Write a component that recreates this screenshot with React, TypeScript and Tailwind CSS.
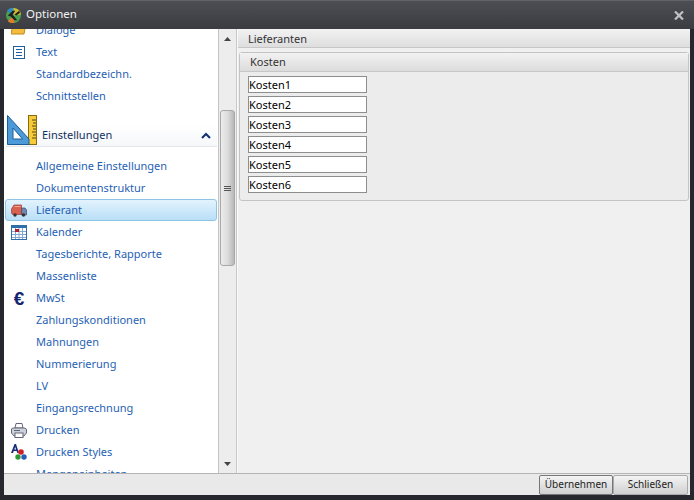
import React from 'react';

const LogoIcon = () => (
  <svg width="15" height="15" viewBox="0 0 16 16" className="shrink-0">
    <circle cx="8" cy="8" r="8" fill="#4aa04f" />
    <path d="M8 8 L1 3 A8 8 0 0 1 8 0 Z" fill="#2f8ac8" />
    <path d="M8 8 L8 0 A8 8 0 0 1 16 7 Z" fill="#d2bb2e" />
    <path d="M8 8 L2 14 A8 8 0 0 0 9 16 Z" fill="#e57a2c" />
    <path d="M2 8 L7 3 H10 L7 7 L12 13 H9 L5 9 Z" fill="#1f2020" />
    <path d="M9 7 L14 3 L15 5 L11 8 Z" fill="#1f2020" />
  </svg>
);

const FolderIcon = () => (
  <svg width="16" height="12" viewBox="0 0 16 12">
    <path d="M2 0 H15 L13 10 H0 Z" fill="#f1bd3b" stroke="#c08a1c" strokeWidth="1" />
  </svg>
);

const TextIcon = () => (
  <svg width="12" height="13" viewBox="0 0 12 13">
    <rect x=".5" y=".5" width="11" height="12" fill="#fff" stroke="#1f5f9f" />
    <path d="M3 3.5 H9 M3 6.5 H9 M3 9.5 H9" stroke="#1f5f9f" strokeWidth="1" />
  </svg>
);

const SetSquareIcon = () => (
  <svg width="30" height="30" viewBox="0 0 30 30">
    <rect x="21.5" y=".5" width="8" height="29" fill="#f5cb3a" stroke="#8a6a10" />
    <path d="M25 5 H29 M26 8 H29 M25 11 H29 M26 14 H29 M25 17 H29 M26 20 H29 M25 23 H29" stroke="#5a4508" strokeWidth="1" />
    <path d="M.5 .5 L22 24 V29.5 H.5 Z" fill="#4d9ad8" stroke="#1c5d96" />
    <path d="M6 13 L15.5 24 H6 Z" fill="#fff" stroke="#1c5d96" />
  </svg>
);

const TruckIcon = () => (
  <svg width="16" height="13" viewBox="0 0 16 13">
    <path d="M.5 5 L3 1 H10.5 V10.5 H2 Q.5 10.5 .5 8 Z" fill="#d9604f" stroke="#9a3a30" strokeWidth=".7" />
    <path d="M3.5 2.5 H9.5" stroke="#f0a79c" strokeWidth="1" />
    <path d="M10.5 4 H14 L15.5 6 V11 H10.5 Z" fill="#7486ad" stroke="#3e4c6c" strokeWidth=".7" />
    <circle cx="4" cy="11" r="1.7" fill="#333" />
    <circle cx="12.5" cy="11" r="1.7" fill="#333" />
  </svg>
);

const CalendarIcon = () => (
  <svg width="16" height="15" viewBox="0 0 16 15">
    <rect x=".5" y=".5" width="15" height="14" fill="#fff" stroke="#2f6ea8" />
    <rect x="1" y="1" width="14" height="2" fill="#2f6ea8" />
    <path d="M1 6.5 H15 M1 9.5 H15 M1 12.5 H15 M4.5 3 V14 M8 3 V14 M11.5 3 V14" stroke="#7fa9d0" strokeWidth="1" />
    <rect x="4" y="4" width="4" height="3" fill="#b3202a" />
  </svg>
);

const PrinterIcon = () => (
  <svg width="16" height="15" viewBox="0 0 16 15">
    <path d="M4 5 L5 .5 H11 L12 5 Z" fill="#fff" stroke="#667" />
    <path d="M.5 6 Q.5 5 3 5 H13 Q15.5 5 15.5 7 V10 L13 13 H3 L.5 10 Z" fill="#ccd2dc" stroke="#667" />
    <rect x="4" y="10" width="8" height="4.5" fill="#fff" stroke="#667" />
    <path d="M3 7.5 H9" stroke="#667" strokeWidth="1" />
  </svg>
);

const StylesIcon = () => (
  <svg width="16" height="16" viewBox="0 0 16 16">
    <path d="M0 9 L3.5 0 H5 L8 9 H6.3 L5.6 7 H2.8 L2 9 Z M3.3 5.6 H5.1 L4.2 3 Z" fill="#1c2f7c" />
    <circle cx="10" cy="8" r="2.8" fill="#cf2027" />
    <circle cx="7" cy="13" r="2.7" fill="#2f9a35" />
    <circle cx="13" cy="13" r="2.7" fill="#2a5cb8" />
  </svg>
);

const EuroIcon = () => (
  <span className="font-['Liberation_Sans',sans-serif] text-[19px] font-bold leading-none text-[#14246e]">€</span>
);

type Row = { label: string; icon?: React.ReactNode; selected?: boolean };

const topRows: Row[] = [
  { label: 'Dialoge', icon: <FolderIcon /> },
  { label: 'Text', icon: <TextIcon /> },
  { label: 'Standardbezeichn.' },
  { label: 'Schnittstellen' },
];

const settingsRows: Row[] = [
  { label: 'Allgemeine Einstellungen' },
  { label: 'Dokumentenstruktur' },
  { label: 'Lieferant', icon: <TruckIcon />, selected: true },
  { label: 'Kalender', icon: <CalendarIcon /> },
  { label: 'Tagesberichte, Rapporte' },
  { label: 'Massenliste' },
  { label: 'MwSt', icon: <EuroIcon /> },
  { label: 'Zahlungskonditionen' },
  { label: 'Mahnungen' },
  { label: 'Nummerierung' },
  { label: 'LV' },
  { label: 'Eingangsrechnung' },
  { label: 'Drucken', icon: <PrinterIcon /> },
  { label: 'Drucken Styles', icon: <StylesIcon /> },
  { label: 'Mengeneinheiten' },
];

const NavRow = ({ row }: { row: Row }) => (
  <div
    className={`flex h-[22px] items-center text-[11px] text-[#1f5fb4] ${
      row.selected ? 'rounded-[3px] border border-[#8fc3e8] bg-gradient-to-b from-[#e3f3fd] to-[#b9dff7]' : 'border border-transparent'
    }`}
  >
    <span className="flex w-[30px] shrink-0 items-center justify-center pr-[4px]">{row.icon}</span>
    <span>{row.label}</span>
  </div>
);

const App: React.FC = () => {
  const costs = ['Kosten1', 'Kosten2', 'Kosten3', 'Kosten4', 'Kosten5', 'Kosten6'];

  return (
    <div className="flex h-[500px] w-[694px] flex-col overflow-hidden bg-[#26282d] font-['Noto_Sans',sans-serif]">
      <header className="flex h-[29px] shrink-0 items-center justify-between border-t border-[#606268] bg-gradient-to-b from-[#4c4e54] to-[#3a3c42] pl-[6px] pr-[10px]">
        <div className="flex items-center gap-[5px]">
          <LogoIcon />
          <span className="pb-[2px] text-[11.5px] text-[#f2f2f2]">Optionen</span>
        </div>
        <svg width="10" height="9" viewBox="0 0 10 9">
          <path d="M1 .5 L9 8.5 M9 .5 L1 8.5" stroke="#bfc1c4" strokeWidth="2.2" />
        </svg>
      </header>

      <div className="mx-1 mb-[5px] flex min-h-0 flex-1 flex-col bg-[#ebebeb]">
        <div className="flex min-h-0 flex-1">
          <aside className="relative h-full w-[215px] shrink-0 overflow-hidden border-r border-[#c4c4c4] bg-white">
            <div className="-mt-[10px] pl-[1px] pr-[1px]">
              {topRows.map(row => (
                <NavRow key={row.label} row={row} />
              ))}
              <div className="mt-[18px] mb-[8px] ml-[1px] flex h-[22px] items-center justify-between border-b border-[#e2e6ea] bg-gradient-to-b from-white to-[#f5f7f9] pl-[36px] pr-[6px] text-[11px] text-[#14305c]">
                <span>Einstellungen</span>
                <svg width="10" height="7" viewBox="0 0 10 7">
                  <path d="M1 6 L5 2 L9 6" fill="none" stroke="#12306e" strokeWidth="2" />
                </svg>
              </div>
              {settingsRows.map(row => (
                <NavRow key={row.label} row={row} />
              ))}
            </div>
            <div className="absolute left-[3px] top-[86px]">
              <SetSquareIcon />
            </div>
          </aside>

          <div className="flex w-[18px] shrink-0 flex-col items-center border-r border-[#c8c8c8] bg-[#ededed]">
            <svg width="7" height="4" viewBox="0 0 7 4" className="mt-2">
              <path d="M3.5 0 L7 4 H0 Z" fill="#444" />
            </svg>
            <div className="mt-[69px] flex h-[156px] w-[15px] items-center justify-center rounded-[3px] border border-[#a8a8a8] bg-gradient-to-r from-[#ececec] via-[#dcdcdc] to-[#b8b8b8]">
              <div className="flex w-[7px] flex-col gap-[1px]">
                <div className="h-px bg-[#555]" />
                <div className="h-px bg-[#555]" />
                <div className="h-px bg-[#555]" />
              </div>
            </div>
            <svg width="7" height="4" viewBox="0 0 7 4" className="mt-auto mb-[7px]">
              <path d="M0 0 H7 L3.5 4 Z" fill="#444" />
            </svg>
          </div>

          <main className="min-w-0 flex-1 border-l border-[#fafafa] bg-[#f0f0f0]">
            <div className="flex h-[19px] items-center border-b border-[#c6c6c6] bg-gradient-to-b from-[#f2f2f2] to-[#dedede] pl-[10px] pt-[3px] text-[11px] text-[#333]">
              Lieferanten
            </div>
            <section className="ml-[1px] mr-[1px] mt-[4px] h-[149px] rounded-[3px] border border-[#c4c4c4] bg-[#ececec]">
              <div className="flex h-[19px] items-center border-b border-[#c6c6c6] bg-gradient-to-b from-[#f2f2f2] to-[#dcdcdc] pl-[10px] text-[11px] text-[#333]">
                Kosten
              </div>
              <div className="ml-2 mt-[4px] flex flex-col gap-[3px]">
                {costs.map(cost => (
                  <div key={cost} className="flex h-[17px] w-[119px] items-center border border-[#8e8e8e] bg-white pt-[1px] text-[11px] text-black">
                    {cost}
                  </div>
                ))}
              </div>
            </section>
          </main>
        </div>

        <footer className="flex h-[22px] shrink-0 items-center justify-end border-t border-[#b4b4b4] bg-[#e9e9e9] pr-[2px]">
          <button className="h-[20px] w-[74px] rounded-[2px] border border-[#777] bg-gradient-to-b from-[#f4f4f4] to-[#d0d0d0] text-[10px] text-[#222]">
            Übernehmen
          </button>
          <button className="h-[20px] w-[75px] rounded-[2px] border border-[#aaa] bg-gradient-to-b from-[#f4f4f4] to-[#d0d0d0] text-[10px] text-[#222]">
            Schließen
          </button>
        </footer>
      </div>
    </div>
  );
};

export default App;
